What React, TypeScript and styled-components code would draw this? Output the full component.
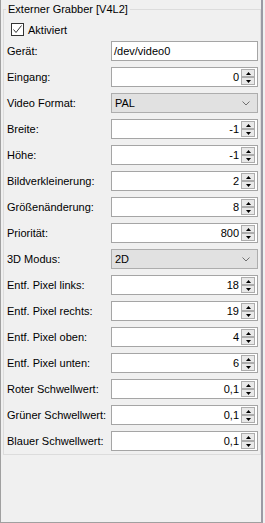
import styled, { createGlobalStyle } from 'styled-components';

const GlobalStyle = createGlobalStyle`
  html, body {
    margin: 0;
    padding: 0;
    background: #f0f0f0;
  }
  body {
    font-family: "Liberation Sans", Arial, sans-serif;
    font-size: 11px;
    color: #000;
  }
`;

type Field =
  | { label: string; kind: 'text'; value: string }
  | { label: string; kind: 'spin'; value: string }
  | { label: string; kind: 'combo'; value: string };

const fields: Field[] = [
  { label: 'Gerät:', kind: 'text', value: '/dev/video0' },
  { label: 'Eingang:', kind: 'spin', value: '0' },
  { label: 'Video Format:', kind: 'combo', value: 'PAL' },
  { label: 'Breite:', kind: 'spin', value: '-1' },
  { label: 'Höhe:', kind: 'spin', value: '-1' },
  { label: 'Bildverkleinerung:', kind: 'spin', value: '2' },
  { label: 'Größenänderung:', kind: 'spin', value: '8' },
  { label: 'Priorität:', kind: 'spin', value: '800' },
  { label: '3D Modus:', kind: 'combo', value: '2D' },
  { label: 'Entf. Pixel links:', kind: 'spin', value: '18' },
  { label: 'Entf. Pixel rechts:', kind: 'spin', value: '19' },
  { label: 'Entf. Pixel oben:', kind: 'spin', value: '4' },
  { label: 'Entf. Pixel unten:', kind: 'spin', value: '6' },
  { label: 'Roter Schwellwert:', kind: 'spin', value: '0,1' },
  { label: 'Grüner Schwellwert:', kind: 'spin', value: '0,1' },
  { label: 'Blauer Schwellwert:', kind: 'spin', value: '0,1' },
];

const App = () => {
  return (
    <>
      <GlobalStyle />
      <Frame>
        <Group>
          <Title>Externer Grabber [V4L2]</Title>
          <CheckRow>
            <CheckBox>
              <svg width="11" height="11" viewBox="0 0 11 11">
                <polyline points="1.5,5.5 4,8.5 9.5,1.5" fill="none" stroke="#333" strokeWidth="1" />
              </svg>
            </CheckBox>
            <span>Aktiviert</span>
          </CheckRow>
          <Form>
            {fields.map((f) => (
              <Row key={f.label}>
                <Label>{f.label}</Label>
                {f.kind === 'text' && <LineEdit>{f.value}</LineEdit>}
                {f.kind === 'spin' && (
                  <SpinBox>
                    <SpinValue>{f.value}</SpinValue>
                    <SpinButtons>
                      <SpinButton>
                        <svg width="5" height="3" viewBox="0 0 5 3">
                          <polygon points="2.5,0 5,3 0,3" fill="#000" />
                        </svg>
                      </SpinButton>
                      <SpinButton>
                        <svg width="5" height="3" viewBox="0 0 5 3">
                          <polygon points="0,0 5,0 2.5,3" fill="#000" />
                        </svg>
                      </SpinButton>
                    </SpinButtons>
                  </SpinBox>
                )}
                {f.kind === 'combo' && (
                  <Combo>
                    <span>{f.value}</span>
                    <svg width="8" height="5" viewBox="0 0 8 5">
                      <polyline points="0.5,0.5 4,4 7.5,0.5" fill="none" stroke="#707070" strokeWidth="1" />
                    </svg>
                  </Combo>
                )}
              </Row>
            ))}
          </Form>
        </Group>
      </Frame>
    </>
  );
};

export default App;

const Frame = styled.div`
  box-sizing: border-box;
  width: 263px;
  height: 523px;
  border-left: 1px solid #a0a0a0;
  border-right: 2px solid #9a9aa4;
  border-bottom: 1px solid #a0a0a0;
  padding-top: 3px;
  padding-left: 2px;
`;

const Group = styled.fieldset`
  margin: 0;
  min-inline-size: 0;
  box-sizing: border-box;
  width: 258px;
  border: 1px solid #dcdcdc;
  padding: 7px 2px 3px 3px;
`;

const Title = styled.legend`
  padding: 0 2px;
  line-height: 13px;
  margin-left: -1px;
`;

const CheckRow = styled.label`
  display: flex;
  align-items: center;
  gap: 4px;
  height: 13px;
  margin-left: 4px;
  margin-bottom: 5px;
`;

const CheckBox = styled.span`
  box-sizing: border-box;
  width: 13px;
  height: 13px;
  border: 1px solid #333;
  background: #fff;
  display: flex;
  align-items: center;
  justify-content: center;
`;

const Form = styled.div`
  display: flex;
  flex-direction: column;
  gap: 6px;
`;

const Row = styled.div`
  display: grid;
  grid-template-columns: 104px 1fr;
  align-items: center;
  height: 20px;
`;

const Label = styled.span`
  white-space: nowrap;
`;

const BoxBase = styled.div`
  box-sizing: border-box;
  height: 20px;
  border: 1px solid #a5a5a5;
  display: flex;
  align-items: center;
`;

const LineEdit = styled(BoxBase)`
  background: #fff;
  padding-left: 2px;
`;

const SpinBox = styled(BoxBase)`
  background: #fff;
  padding-right: 2px;
  gap: 2px;
`;

const SpinValue = styled.span`
  flex: 1;
  text-align: right;
`;

const SpinButtons = styled.div`
  display: flex;
  flex-direction: column;
  width: 14px;
`;

const SpinButton = styled.div`
  box-sizing: border-box;
  height: 8px;
  border: 1px solid #adadad;
  background: #e9e9e9;
  display: flex;
  align-items: center;
  justify-content: center;
`;

const Combo = styled(BoxBase)`
  background: #e1e1e1;
  border-color: #adadad;
  padding: 0 7px 0 3px;
  justify-content: space-between;
`;
